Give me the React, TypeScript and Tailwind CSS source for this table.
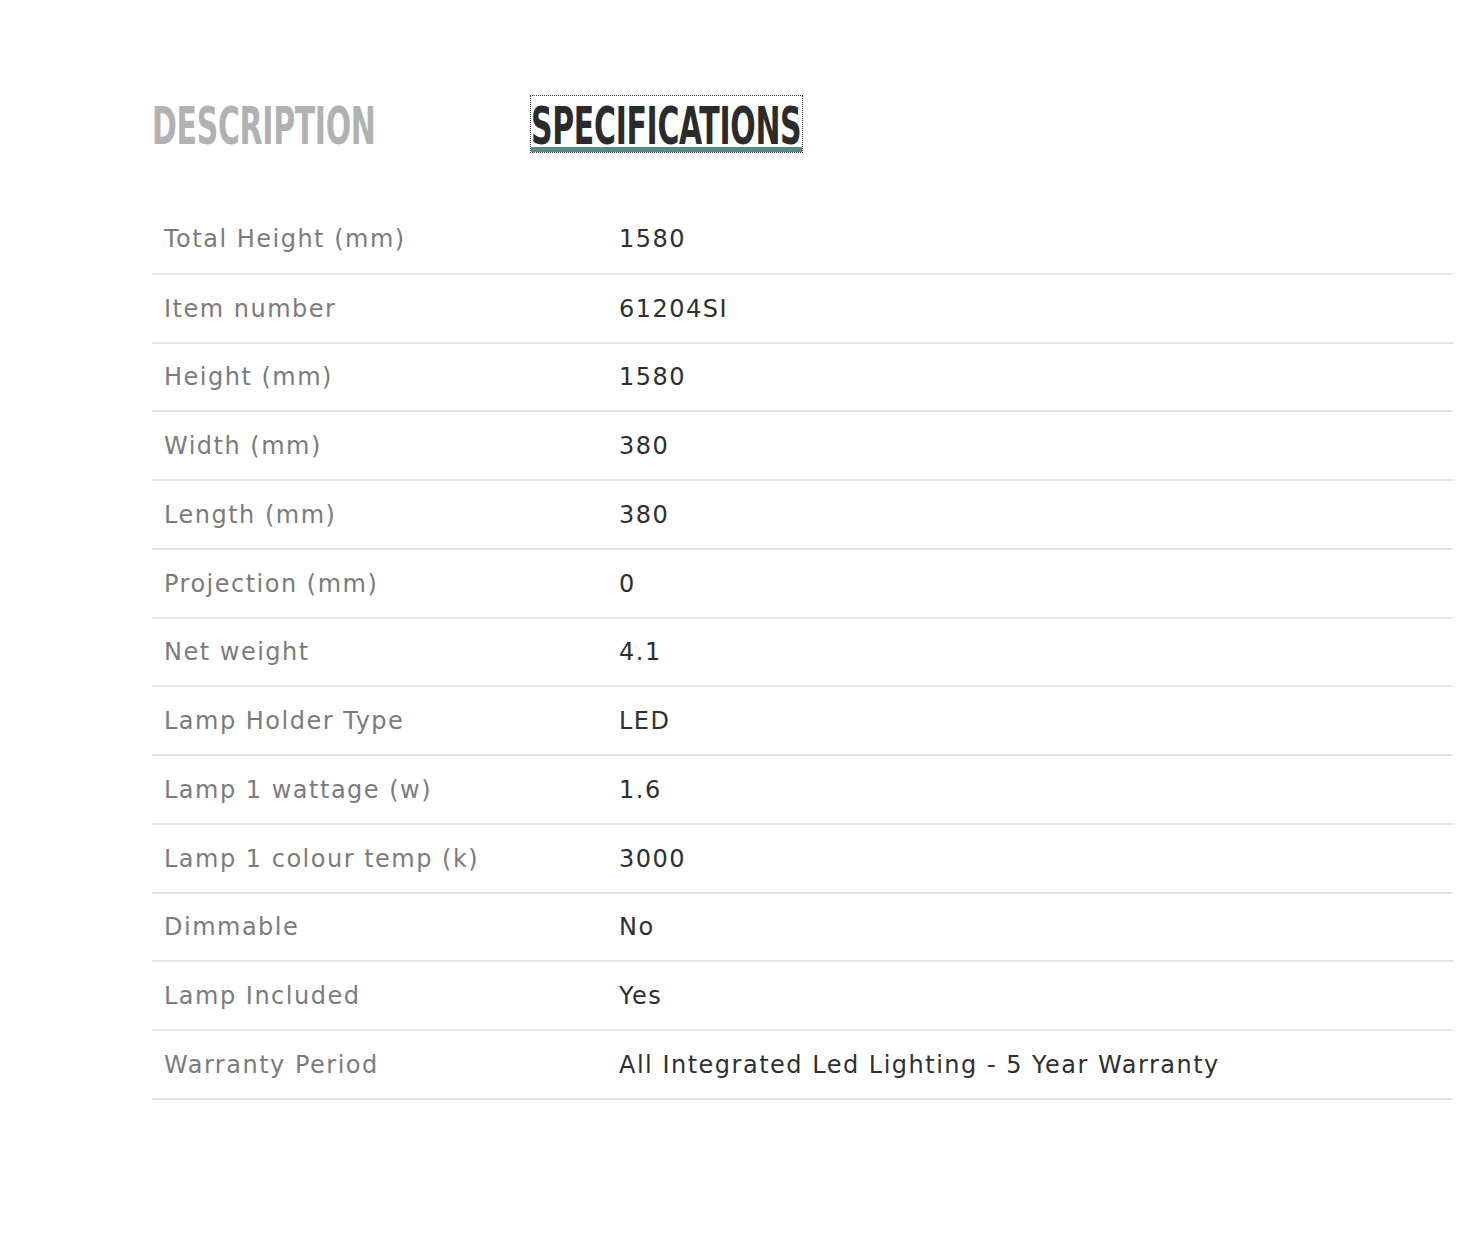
import React from "react";

const specs: [string, string][] = [
  ["Total Height (mm)", "1580"],
  ["Item number", "61204SI"],
  ["Height (mm)", "1580"],
  ["Width (mm)", "380"],
  ["Length (mm)", "380"],
  ["Projection (mm)", "0"],
  ["Net weight", "4.1"],
  ["Lamp Holder Type", "LED"],
  ["Lamp 1 wattage (w)", "1.6"],
  ["Lamp 1 colour temp (k)", "3000"],
  ["Dimmable", "No"],
  ["Lamp Included", "Yes"],
  ["Warranty Period", "All Integrated Led Lighting - 5 Year Warranty"],
];

const headingFont =
  "font-['Liberation_Sans_Narrow','DejaVu_Sans_Condensed','Liberation_Sans',sans-serif]";
const bodyFont = "font-['DejaVu_Sans','Noto_Sans',sans-serif]";

export default function App() {
  return (
    <div className="min-h-[1239px] bg-white pl-[152px] pr-[12px] pt-[95px]">
      <div className="flex items-start">
        <button
          className={`${headingFont} h-[58px] w-[378px] whitespace-nowrap text-left text-[52px] font-bold uppercase leading-none text-[#b1b1b1]`}
        >
          <span className="inline-block origin-left scale-x-[0.64] pt-[3px] tracking-[-0.5px]">
            Description
          </span>
        </button>
        <button
          className={`${headingFont} relative h-[58px] w-[273px] whitespace-nowrap border border-dotted border-[#333] text-left text-[52px] font-bold uppercase leading-none text-[#2b2b2b]`}
        >
          <span className="inline-block origin-left scale-x-[0.64] pt-[3px] tracking-[-0.5px]">
            Specifications
          </span>
          <span className="absolute bottom-0 left-0 right-0 h-[5px] bg-[#56898a]" />
        </button>
      </div>

      <table className={`${bodyFont} mt-[52px] w-full border-collapse text-[24px]`}>
        <tbody>
          {specs.map(([label, value]) => (
            <tr key={label} className="h-[68.75px] border-b-2 border-[#e4e4e4]">
              <td className="w-[467px] pl-[12px] pt-[1px] align-middle tracking-[1.5px] text-[#7b7b7b]">
                {label}
              </td>
              <td className="pt-[1px] align-middle tracking-[1.5px] text-[#2f2f2f]">{value}</td>
            </tr>
          ))}
        </tbody>
      </table>
    </div>
  );
}
